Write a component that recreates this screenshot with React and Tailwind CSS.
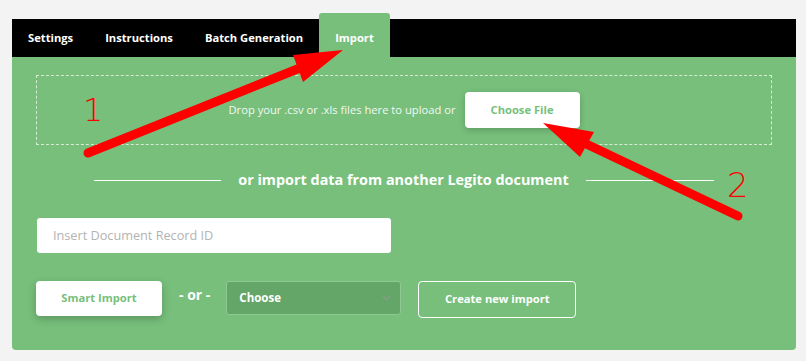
import React from "react";

const TABS = ["Settings", "Instructions", "Batch Generation", "Import"];

function Arrows() {
  return (
    <svg className="absolute inset-0 pointer-events-none" width="806" height="361" viewBox="0 0 806 361">
      <line x1="88" y1="153" x2="305" y2="66" stroke="#ff0000" strokeWidth="9" strokeLinecap="round" />
      <polygon points="343,50 293,55 303,82" fill="#ff0000" />
      <line x1="738" y1="216" x2="580" y2="141" stroke="#ff0000" strokeWidth="9" strokeLinecap="round" />
      <polygon points="543,123 594,132 580,157" fill="#ff0000" />
      <text x="83" y="121" fill="#ff0000" fontSize="32" fontFamily="'DejaVu Sans', sans-serif" fontWeight="200">1</text>
      <text x="727" y="197" fill="#ff0000" fontSize="34" fontFamily="'DejaVu Sans', sans-serif" fontWeight="200">2</text>
    </svg>
  );
}

export default function App() {
  return (
    <div className="relative w-[806px] h-[361px] bg-[#f2f3f2] pl-[12px] pt-[19px] font-['Open_Sans',sans-serif]">
      <div className="w-[784px]">
        {/* tab bar */}
        <div className="flex h-[38px] bg-black">
          {TABS.map((tab) => {
            const active = tab === "Import";
            return (
              <div
                key={tab}
                className={`flex items-center px-[16px] text-[11.2px] font-bold text-white ${
                  active ? "-mt-[6px] h-[44px] pt-[6px] rounded-t-[3px] bg-[#77bf7b]" : "h-[38px]"
                }`}
              >
                {tab}
              </div>
            );
          })}
        </div>

        {/* panel */}
        <div className="bg-[#77bf7b] rounded-b-[4px] px-[24px] pt-[18px] pb-[32px] h-[293px]">
          <div className="h-[70px] border border-dashed border-[#d6ecd7] flex items-center justify-center gap-[9px]">
            <span className="text-[11.2px] text-[#f3f8f3]">Drop your .csv or .xls files here to upload or</span>
            <button className="w-[115px] h-[36px] bg-white rounded-[4px] shadow-[0_2px_6px_rgba(0,0,0,0.2)] text-[11.2px] font-bold text-[#77bf7b]">
              Choose File
            </button>
          </div>

          <div className="flex items-center justify-center gap-[17px] mt-[22px] h-[26px]">
            <div className="w-[127px] h-px bg-white" />
            <span className="text-[14.4px] font-bold text-white">or import data from another Legito document</span>
            <div className="w-[128px] h-px bg-white" />
          </div>

          <div className="mt-[25px] ml-px w-[354px] h-[35px] bg-white rounded-[3px] flex items-center px-[16px] text-[12.7px] text-[#b3b3b3]">
            Insert Document Record ID
          </div>

          <div className="flex items-start mt-[28px]">
            <button className="w-[126px] h-[35px] bg-white rounded-[4px] shadow-[0_3px_8px_rgba(0,0,0,0.22)] text-[11.2px] font-bold text-[#77bf7b]">
              Smart Import
            </button>
            <span className="ml-[17px] whitespace-nowrap text-[14px] font-bold text-white leading-[28px]">- or -</span>
            <div className="ml-[16px] w-[175px] h-[34px] bg-[#64a668] border border-[#8fc892] rounded-[3px] flex items-center justify-between pl-[12px] pr-[9px]">
              <span className="text-[11.5px] font-bold text-white">Choose</span>
              <svg width="9" height="6" viewBox="0 0 9 6">
                <path d="M1 1l3.5 3.5L8 1" fill="none" stroke="#8a9a8b" strokeWidth="1.3" />
              </svg>
            </div>
            <button className="ml-[17px] w-[158px] h-[37px] border border-white rounded-[4px] text-[11.2px] font-bold text-white">
              Create new import
            </button>
          </div>
        </div>
      </div>
      <Arrows />
    </div>
  );
}
